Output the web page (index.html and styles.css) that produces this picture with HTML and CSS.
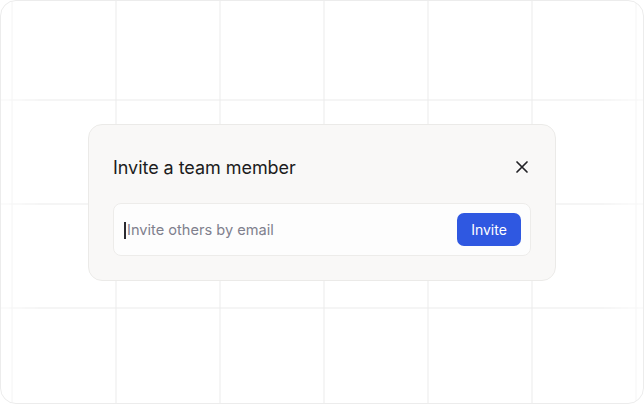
FILE: index.html
```html
<!DOCTYPE html>
<html lang="en">
<head>
<meta charset="utf-8">
<title>Invite a team member</title>
<link rel="stylesheet" href="styles.css">
</head>
<body>
<div class="frame">
  <div class="modal">
    <div class="modal-header">
      <h2 class="modal-title">Invite a team member</h2>
      <button class="close-btn" aria-label="Close">
        <svg width="14" height="14" viewBox="0 0 14 14" fill="none"><path d="M2 2 L12 12 M12 2 L2 12" stroke="#222226" stroke-width="1.7" stroke-linecap="round"/></svg>
      </button>
    </div>
    <div class="invite-field">
      <div class="field-input"><span class="caret"></span><span class="placeholder">Invite others by email</span></div>
      <button class="invite-btn">Invite</button>
    </div>
  </div>
</div>
</body>
</html>
```
FILE: styles.css
```css
* { box-sizing: border-box; }
html, body { margin: 0; padding: 0; background: #ffffff; }
body { font-family: Inter, "Noto Sans", sans-serif; }

.frame {
  position: relative;
  width: 644px;
  height: 404px;
  border: 1.5px solid #ececec;
  border-radius: 16px;
  overflow: hidden;
  background: #ffffff;
  display: flex;
  align-items: center;
  justify-content: center;
}
.frame::before {
  content: "";
  position: absolute;
  inset: 0;
  background-image:
    linear-gradient(to right, #ebebeb 0, #ebebeb 1.5px, transparent 1.5px),
    linear-gradient(to bottom, #ebebeb 0, #ebebeb 1.5px, transparent 1.5px);
  background-size: 104px 104px;
  background-position: 10.5px 98.5px;
  -webkit-mask-image: linear-gradient(to right, rgba(0,0,0,0.35) 0, #000 40px, #000 600px, rgba(0,0,0,0.35) 100%);
  mask-image: linear-gradient(to right, rgba(0,0,0,0.35) 0, #000 40px, #000 600px, rgba(0,0,0,0.35) 100%);
}

.modal {
  position: relative;
  width: 468px;
  height: 157px;
  margin-top: 1px;
  background: #f9f8f7;
  border: 1px solid #ebeae8;
  border-radius: 14px;
  padding: 24px;
}
.modal-header {
  display: flex;
  align-items: center;
  justify-content: space-between;
  height: 36px;
  margin-bottom: 18px;
}
.modal-title {
  margin: 0;
  font-size: 18px;
  font-weight: 400;
  color: #1c1c20;
  letter-spacing: -0.05px;
}
.close-btn {
  border: 0;
  background: none;
  padding: 0;
  width: 14px;
  height: 14px;
  margin-right: 2px;
  display: flex;
  cursor: pointer;
}

.invite-field {
  display: flex;
  align-items: center;
  justify-content: space-between;
  height: 53px;
  background: #fdfdfd;
  border: 1px solid #edecea;
  border-radius: 8px;
  padding: 0 9px 0 10px;
}
.field-input {
  display: flex;
  align-items: center;
  font-size: 14.6px;
  color: #7f808d;
  padding-top: 1px;
}
.caret {
  display: inline-block;
  width: 1.5px;
  height: 17px;
  background: #2a2a30;
  margin-right: 1.5px;
}
.invite-btn {
  width: 64px;
  height: 33px;
  border: 0;
  border-radius: 7px;
  background: #2f58e1;
  color: #ffffff;
  font-family: Inter, "Noto Sans", sans-serif;
  font-size: 14px;
  font-weight: 400;
  cursor: pointer;
}
```
